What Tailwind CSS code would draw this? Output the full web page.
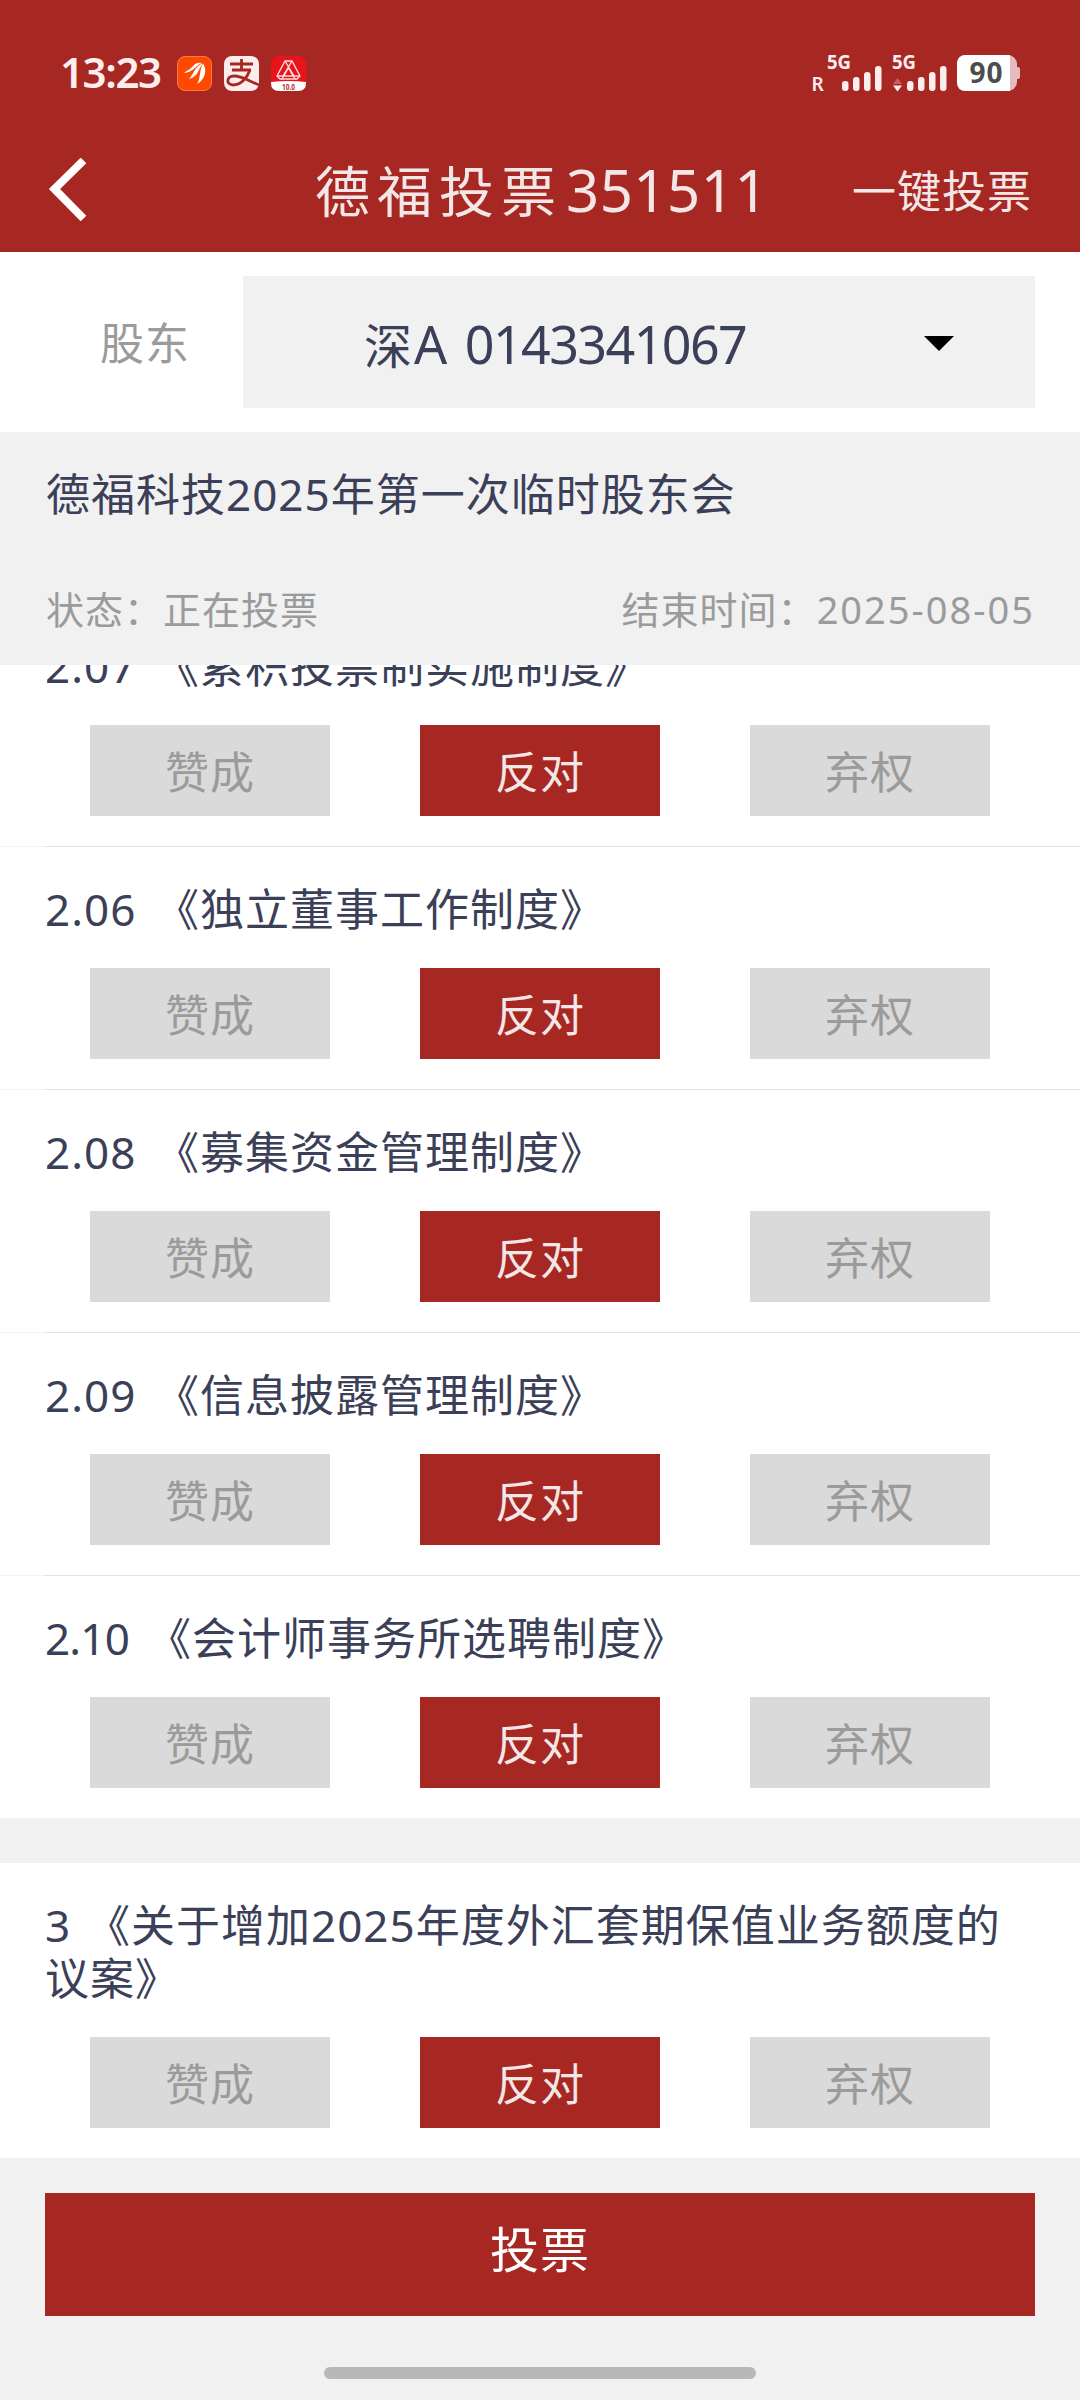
<!DOCTYPE html>
<html lang="zh-CN">
<head>
    <meta charset="UTF-8">
    <meta name="viewport" content="width=device-width, initial-scale=1.0">
    <title>德福投票351511</title>
    <script src="https://cdn.jsdelivr.net/npm/@tailwindcss/browser@4"></script>
</head>
<body class="w-[1080px] h-[2400px] overflow-hidden flex flex-col bg-[#f1f1f1] font-['Noto_Sans','Noto_Sans_CJK_SC',sans-serif] text-[#3b3f58]">

    <header class="h-[252px] shrink-0 bg-[#a72722] text-[#f3e6e6]">
        <!-- 状态栏 -->
        <div class="h-[128px] pt-[18px] pl-[60px] pr-[60px] flex items-center justify-between">
            <div class="flex items-center">
                <span class="w-[117px] pb-[2px] text-[42px] leading-none font-semibold tracking-[-1.4px] text-[#fdeeee]">13:23</span>
                <div class="flex gap-[12px]">
                    <svg class="w-[35px] h-[35px]" viewBox="0 0 35 35">
                        <rect x=".5" y=".5" width="34" height="34" rx="7.5" fill="#ff4800" stroke="#ff7a45"/>
                        <path d="M7 17C10 14 13 14 16 10C18 7 22 6 25 7C20 8 16 17 7 17Z" fill="#fff"/>
                        <path d="M12 23C16 19 19 9 25.500 7.500C22 12 21 21 12 23Z" fill="#fff"/>
                        <path d="M20 28C24 22 22 14 26 7.500C30 13 29 23 20 28Z" fill="#fff"/>
                    </svg>
                    <svg class="w-[35px] h-[35px]" viewBox="0 0 35 35">
                        <rect width="35" height="35" rx="8" fill="#fdeeee"/>
                        <g fill="none" stroke="#a72722" stroke-width="2.8">
                            <path d="M6 8H29M17.500 3V14M8 14H27"/>
                            <path d="M26 14C23 22 17 29 9 29C2 29 2 20 10 20C18 20 25 25 35 29"/>
                        </g>
                    </svg>
                    <svg class="w-[35px] h-[35px]" viewBox="0 0 35 35">
                        <rect width="35" height="35" rx="8" fill="#e8141c"/>
                        <path d="M0 26Q17.500 24 35 26V27Q35 35 27 35H8Q0 35 0 27Z" fill="#fff"/>
                        <g fill="none" stroke="#ffdcdc" stroke-width="1.4" stroke-linejoin="round">
                            <path d="M14 5H21L29 20L26 23H9L6 20Z"/>
                            <path d="M14 5L23 20M21 5L12 20M6 20H29M17.500 12L24 23M17.500 12L11 23"/>
                        </g>
                        <text x="17.500" y="33.500" font-size="9" font-weight="700" text-anchor="middle" textLength="13" lengthAdjust="spacingAndGlyphs" fill="#b3342c">10.0</text>
                    </svg>
                </div>
            </div>
            <svg class="w-[210px] h-[40px] overflow-visible" viewBox="0 0 210 40">
                <g fill="#fdeeee" font-weight="700">
                    <text x="1.500" y="38" font-size="19" font-weight="600">R</text>
                    <text x="17" y="16" font-size="19" textLength="24" lengthAdjust="spacingAndGlyphs">5G</text>
                    <text x="82" y="16" font-size="19" textLength="24" lengthAdjust="spacingAndGlyphs">5G</text>
                    <rect x="32" y="28" width="6.500" height="10" rx="3"/>
                    <rect x="43" y="24" width="6.500" height="14" rx="3"/>
                    <rect x="54" y="19" width="6.500" height="19" rx="3"/>
                    <rect x="65" y="13" width="6.500" height="25" rx="3"/>
                    <path d="M83 31L87.500 25L92 31Z" fill="#c4605d"/>
                    <path d="M83 32.500L87.500 38.500L92 32.500Z"/>
                    <rect x="97" y="28" width="6.500" height="10" rx="3"/>
                    <rect x="108" y="24" width="6.500" height="14" rx="3"/>
                    <rect x="119" y="19" width="6.500" height="19" rx="3"/>
                    <rect x="130" y="13" width="6.500" height="25" rx="3"/>
                </g>
                <rect x="147" y="2" width="60" height="36" rx="9" fill="#e5bcbc"/>
                <rect x="205" y="14" width="5" height="12" rx="2" fill="#e5bcbc"/>
                <path d="M156 2H200V38H156Q147 38 147 29V11Q147 2 156 2Z" fill="#fff"/>
                <text x="176" y="30" font-size="28" font-weight="700" text-anchor="middle" textLength="33" fill="#4d4d4d">90</text>
            </svg>
        </div>

        <!-- 标题栏 -->
        <div class="h-[124px] pl-[48px] pr-[48px] grid grid-cols-[267px_1fr_auto] items-center">
            <svg class="w-[40px] h-[64px]" viewBox="0 0 40 64" fill="none" stroke="#fff" stroke-width="8">
                <path d="M35.500 2.500L6.500 31L35.500 60.500"/>
            </svg>
            <h1 class="text-[55px] leading-none tracking-[7px] whitespace-nowrap">德福投票<span class="ml-[3px] text-[58px] tracking-[0.5px]">351511</span></h1>
            <a href="#" class="pt-px text-[44px] leading-none tracking-[1px] whitespace-nowrap">一键投票</a>
        </div>
    </header>

    <!-- 股东账号 -->
    <section class="h-[180px] shrink-0 bg-white flex items-center pl-[100px] pr-[45px]">
        <label class="w-[143px] pt-[2px] text-[44px] leading-none tracking-[1px] text-[#9b9b9b]">股东</label>
        <div class="flex-1 h-[132px] bg-[#f1f1f1] pl-[121px] pr-[81px] flex items-center justify-between">
            <span class="pt-[3px] text-[52px] leading-none whitespace-nowrap"><span class="mr-[2px] text-[48px]">深</span>A <span class="ml-[4px] tracking-[-1.6px]">0143341067</span></span>
            <svg class="w-[30px] h-[15px] mt-[2px]" viewBox="0 0 30 15"><path d="M0 0H30L15 15Z" fill="#000"/></svg>
        </div>
    </section>

    <!-- 会议信息 -->
    <section class="h-[233px] shrink-0 pl-[46px] pr-[45px] pt-[34px]">
        <h2 class="text-[44px] leading-[56px] tracking-[1px]">德福科技2025年第一次临时股东会</h2>
        <div class="mt-[59px] flex justify-between text-[38px] leading-[56px] tracking-[1px] text-[#9b9b9b]">
            <span>状态：正在投票</span>
            <span>结束时间：<span class="tracking-[2px]">2025-08-05</span></span>
        </div>
    </section>

    <!-- 议案列表 -->
    <main class="h-[1493px] shrink-0 overflow-hidden flex flex-col justify-end">
        <div id="group-2"></div>
        <div class="h-[45px] shrink-0"></div>
        <div id="group-3"></div>
    </main>

    <footer class="flex-1 px-[45px] pt-[35px] flex flex-col items-center">
        <button class="w-full h-[123px] pb-[10px] bg-[#a72722] text-white text-[49px] leading-none tracking-[1px]">投票</button>
        <div class="mt-[51px] w-[432px] h-[12px] rounded-full bg-[#b8b8b8]"></div>
    </footer>

    <script>
        const group2 = [
            { no: '2.07', width: 110, title: '《累积投票制实施制度》' },
            { no: '2.06', width: 110, title: '《独立董事工作制度》' },
            { no: '2.08', width: 110, title: '《募集资金管理制度》' },
            { no: '2.09', width: 110, title: '《信息披露管理制度》' },
            { no: '2.10', width: 102, title: '《会计师事务所选聘制度》' }
        ];
        const group3 = [
            { no: '3', width: 41, title: '《关于增加2025年度外汇套期保值业务额度的议案》' }
        ];

        // 生成一组议案
        function renderGroup(id, items) {
            document.getElementById(id).innerHTML = items.map((item, i) => `
                <article class="bg-white">
                    <div class="px-[45px] pt-[36px] pb-[32px]">
                        <h3 class="text-[44px] leading-[53px] tracking-[1px] break-all"><span class="inline-block ${item.no === '2.10' ? 'tracking-[-0.8px]' : ''}" style="width:${item.width}px">${item.no}</span>${item.title}</h3>
                    </div>
                    <div class="px-[90px] pb-[30px] grid grid-cols-3 gap-[90px] text-[44px] leading-none tracking-[1px]">
                        <button class="h-[91px] pt-[3px] bg-[#dadada] text-[#9b9b9b]">赞成</button>
                        <button class="h-[91px] pt-[3px] bg-[#a72722] text-[#f3e6e6]">反对</button>
                        <button class="h-[91px] pt-[3px] bg-[#dadada] text-[#9b9b9b]">弃权</button>
                    </div>
                    ${i < items.length - 1 ? '<div class="h-px pl-[45px] bg-[#f3f3f3]"><div class="h-px bg-[#e0e0e0]"></div></div>' : ''}
                </article>
            `).join('');
        }

        renderGroup('group-2', group2);
        renderGroup('group-3', group3);
    </script>
</body>
</html>
